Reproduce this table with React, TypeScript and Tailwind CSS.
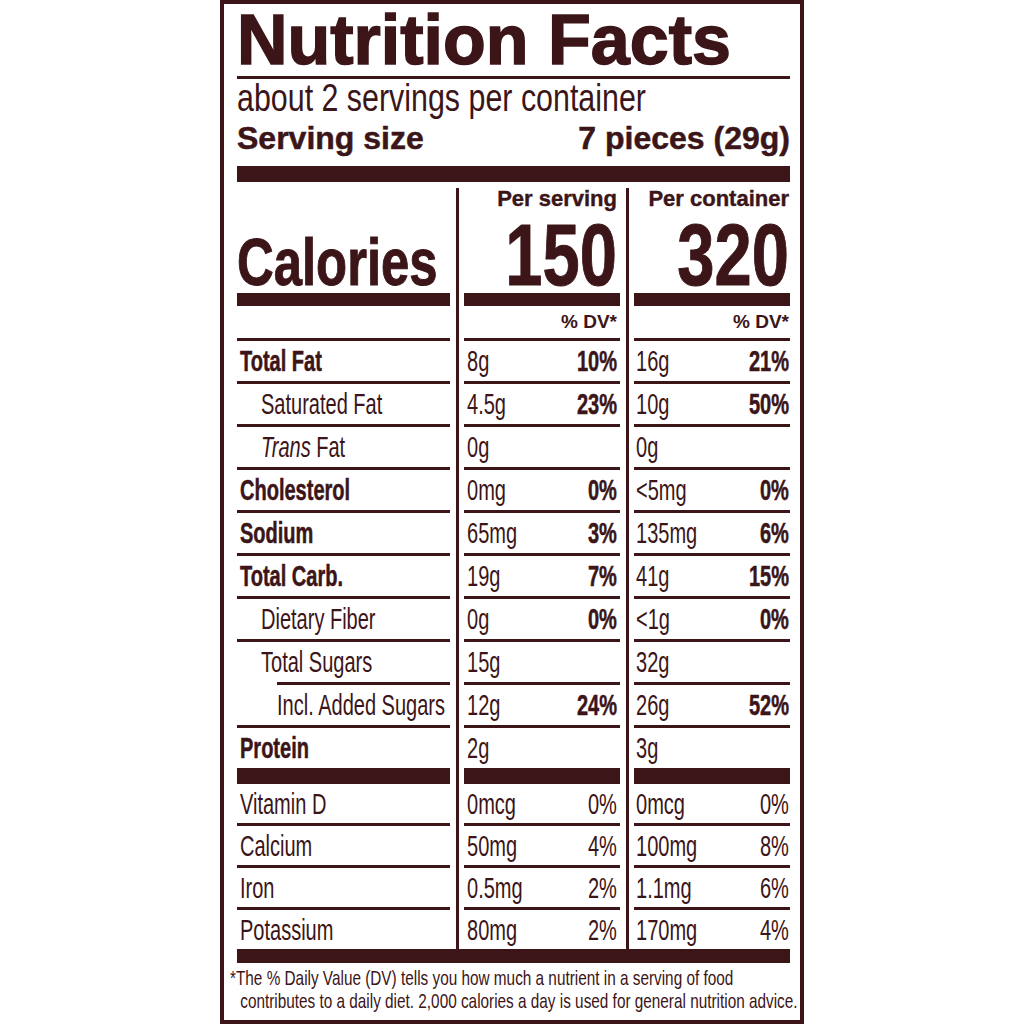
import { Fragment } from "react";

type Nutrient = {
  label: string;
  italic?: string;
  kind: "bold" | "sub" | "sub2";
  a: string;
  ap?: string;
  b: string;
  bp?: string;
};

const nutrients: Nutrient[] = [
  { label: "Total Fat", kind: "bold", a: "8g", ap: "10%", b: "16g", bp: "21%" },
  { label: "Saturated Fat", kind: "sub", a: "4.5g", ap: "23%", b: "10g", bp: "50%" },
  { label: "Fat", italic: "Trans", kind: "sub", a: "0g", b: "0g" },
  { label: "Cholesterol", kind: "bold", a: "0mg", ap: "0%", b: "<5mg", bp: "0%" },
  { label: "Sodium", kind: "bold", a: "65mg", ap: "3%", b: "135mg", bp: "6%" },
  { label: "Total Carb.", kind: "bold", a: "19g", ap: "7%", b: "41g", bp: "15%" },
  { label: "Dietary Fiber", kind: "sub", a: "0g", ap: "0%", b: "<1g", bp: "0%" },
  { label: "Total Sugars", kind: "sub", a: "15g", b: "32g" },
  { label: "Incl. Added Sugars", kind: "sub2", a: "12g", ap: "24%", b: "26g", bp: "52%" },
  { label: "Protein", kind: "bold", a: "2g", b: "3g" },
];

const minerals = [
  { label: "Vitamin D", a: "0mcg", ap: "0%", b: "0mcg", bp: "0%" },
  { label: "Calcium", a: "50mg", ap: "4%", b: "100mg", bp: "8%" },
  { label: "Iron", a: "0.5mg", ap: "2%", b: "1.1mg", bp: "6%" },
  { label: "Potassium", a: "80mg", ap: "2%", b: "170mg", bp: "4%" },
];

// condensed type is faked by squeezing Liberation Sans horizontally
const sans = "font-['Liberation_Sans',Arial,sans-serif]";

function Sep() {
  return (
    <div className="flex justify-center">
      <div className="w-[3px] bg-[#3b1518]" />
    </div>
  );
}

function Rule({ indent }: { indent?: boolean }) {
  return <div className={indent ? "h-[3px] ml-[40px] bg-[#3b1518]" : "h-[3px] bg-[#3b1518]"} />;
}

function ValueCell({
  v,
  p,
  last,
  rule = true,
  boldPct = true,
  h = "h-[40px]",
}: {
  v: string;
  p?: string;
  last?: boolean;
  rule?: boolean;
  boldPct?: boolean;
  h?: string;
}) {
  return (
    <div className="flex flex-col">
      {rule && <Rule />}
      <div className={`flex justify-between ${h} leading-[40px] text-[29px] ${last ? "pl-[2px] pr-[1px]" : "pl-[3px] pr-[3px]"}`}>
        <span className="origin-left scale-x-[0.69] whitespace-nowrap">{v}</span>
        {p && (
          <span
            className={`origin-right scale-x-[0.69] whitespace-nowrap ${
              boldPct ? "font-bold [-webkit-text-stroke:0.5px_#3b1518]" : ""
            }`}
          >
            {p}
          </span>
        )}
      </div>
    </div>
  );
}

export default function App() {
  return (
    <div className={`${sans} min-h-screen bg-white text-[#3b1518]`}>
      <div className="mx-auto w-[584px] h-[1024px] border-4 border-[#3b1518] pl-[13px] pr-[10px] flex flex-col">
        <h1 className="font-bold text-[70px] leading-[72px] [-webkit-text-stroke:1.5px_#3b1518] whitespace-nowrap">
          Nutrition Facts
        </h1>
        <div className="h-[3px] bg-[#3b1518]" />
        <p className="mt-[1px] text-[38px] leading-[36px] origin-left scale-x-[0.8] whitespace-nowrap">
          about 2 servings per container
        </p>
        <div className="mt-[4px] flex justify-between font-bold text-[32px] leading-[36px] [-webkit-text-stroke:0.5px_#3b1518]">
          <span>Serving size</span>
          <span>7 pieces (29g)</span>
        </div>
        <div className="mt-[10px] h-[16px] bg-[#3b1518]" />

        <div className="mt-[6px] grid grid-cols-[213px_14px_156px_14px_156px]">
          {/* calories header */}
          <div className="h-[105px] flex flex-col justify-end pb-[5px]">
            <span className="font-bold text-[66px] leading-[52px] origin-left scale-x-[0.77] whitespace-nowrap [-webkit-text-stroke:1px_#3b1518]">
              Calories
            </span>
          </div>
          <Sep />
          <div className="h-[105px] flex flex-col items-end justify-between pr-[3px] pb-[5px]">
            <span className="font-bold text-[22px] leading-[22px] [-webkit-text-stroke:0.4px_#3b1518]">Per serving</span>
            <span className="font-bold text-[88px] leading-[66px] origin-right scale-x-[0.76] [-webkit-text-stroke:1px_#3b1518]">
              150
            </span>
          </div>
          <Sep />
          <div className="h-[105px] flex flex-col items-end justify-between pr-[1px] pb-[5px]">
            <span className="font-bold text-[22px] leading-[22px] [-webkit-text-stroke:0.4px_#3b1518]">Per container</span>
            <span className="font-bold text-[88px] leading-[66px] origin-right scale-x-[0.76] [-webkit-text-stroke:1px_#3b1518]">
              320
            </span>
          </div>

          {/* bars under calories */}
          <div className="h-[13px] bg-[#3b1518]" />
          <Sep />
          <div className="h-[13px] bg-[#3b1518]" />
          <Sep />
          <div className="h-[13px] bg-[#3b1518]" />

          {/* % DV header */}
          <div className="h-[32px]" />
          <Sep />
          <div className="h-[32px] leading-[32px] text-right pr-[3px] font-bold text-[19px]">% DV*</div>
          <Sep />
          <div className="h-[32px] leading-[32px] text-right pr-[1px] font-bold text-[19px]">% DV*</div>

          {nutrients.map((n) => (
            <Fragment key={n.label}>
              <div className="flex flex-col">
                <Rule indent={n.kind === "sub2"} />
                <div
                  className={`h-[40px] leading-[40px] text-[29px] whitespace-nowrap ${
                    n.kind === "bold"
                      ? "pl-[3px] font-bold [-webkit-text-stroke:0.5px_#3b1518]"
                      : n.kind === "sub"
                        ? "pl-[24px]"
                        : "pl-[40px]"
                  }`}
                >
                  <div className="origin-left scale-x-[0.69]">
                    {n.italic && <em className="italic">{n.italic} </em>}
                    {n.label}
                  </div>
                </div>
              </div>
              <Sep />
              <ValueCell v={n.a} p={n.ap} />
              <Sep />
              <ValueCell v={n.b} p={n.bp} last />
            </Fragment>
          ))}

          {/* bars before vitamins */}
          <div className="h-[16px] bg-[#3b1518]" />
          <Sep />
          <div className="h-[16px] bg-[#3b1518]" />
          <Sep />
          <div className="h-[16px] bg-[#3b1518]" />

          {minerals.map((m, i) => (
            <Fragment key={m.label}>
              <div className="flex flex-col">
                {i > 0 && <Rule />}
                <div className="h-[39px] leading-[40px] text-[29px] pl-[3px] whitespace-nowrap">
                  <div className="origin-left scale-x-[0.69]">{m.label}</div>
                </div>
              </div>
              <Sep />
              <ValueCell v={m.a} p={m.ap} rule={i > 0} boldPct={false} h="h-[39px]" />
              <Sep />
              <ValueCell v={m.b} p={m.bp} rule={i > 0} boldPct={false} h="h-[39px]" last />
            </Fragment>
          ))}
        </div>
        <div className="h-[14px] bg-[#3b1518]" />

        <div className="mt-[3px] -ml-[7px] text-[21px] leading-[23px] whitespace-nowrap">
          <div className="origin-left scale-x-[0.73]">*The % Daily Value (DV) tells you how much a nutrient in a serving of food</div>
          <div className="origin-left scale-x-[0.73] pl-[14px]">
            contributes to a daily diet. 2,000 calories a day is used for general nutrition advice.
          </div>
        </div>
      </div>
    </div>
  );
}
